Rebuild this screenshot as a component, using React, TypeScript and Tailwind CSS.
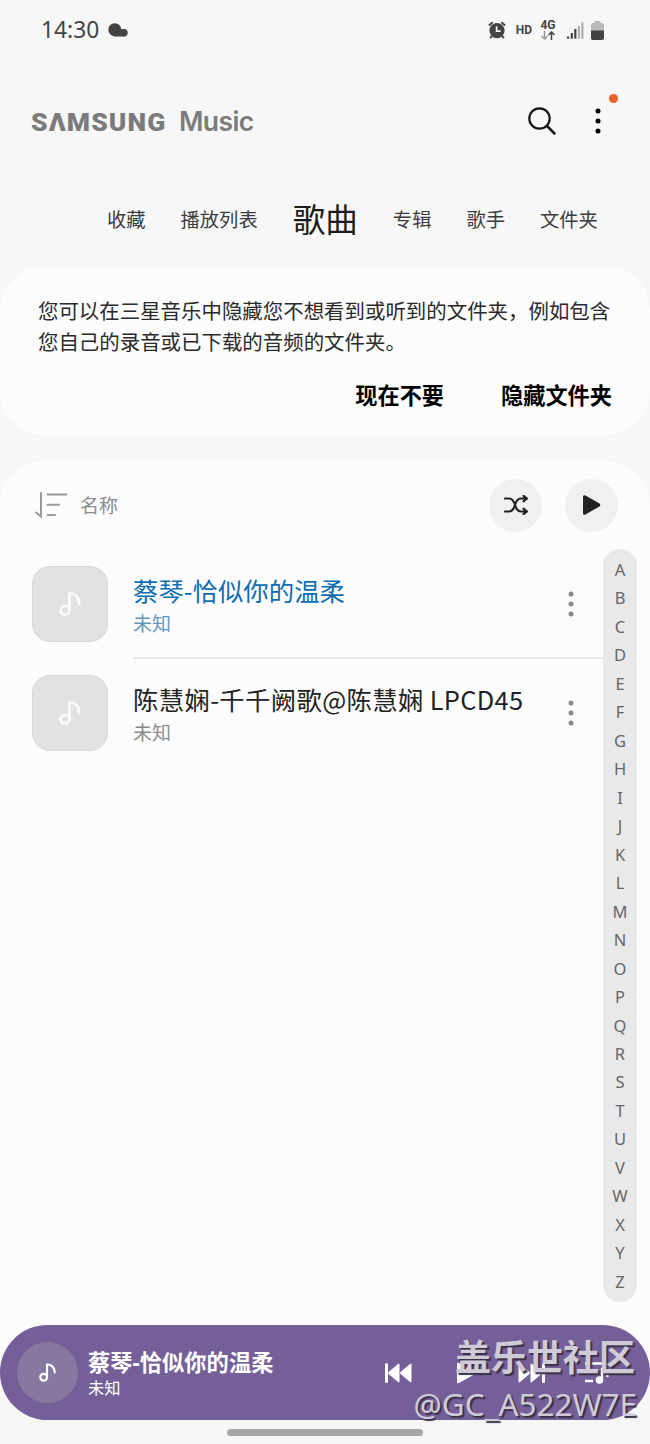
import React from "react";
import clsx from "clsx";

interface SongType {
  title: string;
  artist: string;
  playing?: boolean;
}

const tabs = ["收藏", "播放列表", "歌曲", "专辑", "歌手", "文件夹"];
const letters = "ABCDEFGHIJKLMNOPQRSTUVWXYZ".split("");
const songs: SongType[] = [
  { title: "蔡琴-恰似你的温柔", artist: "未知", playing: true },
  { title: "陈慧娴-千千阙歌@陈慧娴 LPCD45", artist: "未知" },
];

const NoteIcon = ({ className }: { className?: string }) => (
  <svg viewBox="0 0 22 24" className={className} fill="none" stroke="currentColor" strokeWidth="2.8">
    <circle cx="6" cy="18.2" r="4.4" />
    <path d="M10.4 18V1.6h1.100c5 0 8.800 4.200 8.800 10.400" strokeLinecap="round" strokeLinejoin="round" />
  </svg>
);

const DotsIcon = ({ className, r }: { className?: string; r: number }) => (
  <svg viewBox="0 0 8 28" className={className} fill="currentColor">
    <circle cx="4" cy="4" r={r} />
    <circle cx="4" cy="14" r={r} />
    <circle cx="4" cy="24" r={r} />
  </svg>
);

const SkipIcon = ({ className }: { className?: string }) => (
  <svg viewBox="0 0 27 20" className={className} fill="currentColor">
    <rect x="0" y="0" width="3" height="20" rx="1.5" />
    <path d="M14.5 1.5v17q0 1.5-1.5.5L3.6 11q-1-1 0-2L13 1q1.5-1 1.5.5zM26.5 1.5v17q0 1.5-1.5.5L15.5 11q-1-1 0-2L25 1q1.5-1 1.5.5z" />
  </svg>
);

const StatusBar = () => (
  <div className="flex h-[60px] items-center pr-[46px] pl-[41px] text-[#444]">
    <div className="pt-px text-[22.8px] leading-none">14:30</div>
    <svg viewBox="0 0 20 14" className="ml-[9px] h-[14px] w-5" fill="currentColor">
      <circle cx="6.8" cy="6.7" r="6.5" />
      <circle cx="16" cy="9.8" r="3.7" />
      <path d="M6 6h7.500l2.500.3v7.200H6z" />
    </svg>
    <div className="ml-auto flex items-center">
      <svg viewBox="0 0 18 18" className="h-[18px] w-[18px]" fill="none" stroke="currentColor">
        <circle cx="9" cy="9.6" r="7.6" fill="currentColor" stroke="none" />
        <path d="M.9 4.6 4.6 1.2M17.1 4.6l-3.7-3.4M3.9 14.8l-1.7 2.3M14.1 14.8l1.7 2.3" strokeWidth="2" />
        <path d="M8.6 5.3v4.8h4" stroke="#f7f7f7" strokeWidth="1.7" />
      </svg>
      <span className="mb-px ml-[10px] font-['Roboto'] text-[12px] leading-none font-bold">HD</span>
      <div className="ml-2 flex w-[16px] flex-col items-center">
        <span className="font-['Roboto'] text-[12px] leading-[10px] font-bold">4G</span>
        <svg viewBox="0 0 14 9" className="mt-px h-[9px] w-[14px]" fill="none" strokeWidth="1.5">
          <path d="M3.5 0v8M.5 5l3 3 3-3" stroke="#999" />
          <path d="M10.5 9V1M7.5 4l3-3 3 3" stroke="#444" />
        </svg>
      </div>
      <svg viewBox="0 0 17 17" className="ml-[11px] h-[17px] w-[17px]" fill="currentColor">
        <rect x="0" y="14.5" width="2.2" height="2.2" />
        <rect x="3.7" y="11" width="2.2" height="5.7" />
        <rect x="7.2" y="7" width="2.2" height="9.7" />
        <rect x="10.9" y="4" width="2" height="12.7" fill="#aaa" />
        <rect x="14.4" y="0.5" width="2" height="16.2" fill="#aaa" />
      </svg>
      <svg viewBox="0 0 13 19" className="ml-[7px] h-[19px] w-[13px]">
        <path d="M3.5 0h6v2H11a2 2 0 0 1 2 2v6H0V4a2 2 0 0 1 2-2h1.5z" fill="#b9b9b9" />
        <path d="M0 9.5h13V17a2 2 0 0 1-2 2H2a2 2 0 0 1-2-2z" fill="#444" />
      </svg>
    </div>
  </div>
);

const Header = () => (
  <div className="flex h-[122px] items-center pr-[48px] pl-[31px]">
    <div className="flex items-baseline pt-[2px] leading-none text-[#7b7b7b]">
      <span aria-label="SAMSUNG" className="w-[148px] font-['Roboto'] text-[26.5px] font-black tracking-[1.1px]">
        SΛMSUNG
      </span>
      <span className="font-['Inter'] text-[26.5px] font-semibold tracking-[-0.6px]">Music</span>
    </div>
    <svg viewBox="0 0 28 28" className="ml-auto h-7 w-7" fill="none" stroke="#151515">
      <circle cx="11.5" cy="11.5" r="10.2" strokeWidth="2.2" />
      <path d="m19 19 7.5 7.5" strokeWidth="2.5" strokeLinecap="round" />
    </svg>
    <div className="relative ml-[38px]">
      <DotsIcon r={2.5} className="h-7 w-2 text-black" />
      <span className="absolute -top-[13px] left-[15px] size-[9px] rounded-full bg-[#e8622a]" />
    </div>
  </div>
);

const Tabs = () => (
  <div className="flex h-[85px] items-center gap-[35px] pl-[107px] text-[19.3px] text-[#3c3c3c]">
    {tabs.map((tab) => (
      <div
        key={tab}
        className={clsx("-mt-[10px] h-[60px] leading-[60px] whitespace-nowrap", tab === "歌曲" && "text-[32.6px] text-[#1c1c1c]")}
      >
        {tab}
      </div>
    ))}
  </div>
);

const SongRow = ({ song }: { song: SongType }) => (
  <div className="flex h-[109px] pl-8">
    <div className="flex size-[76px] shrink-0 items-center justify-center rounded-[18px] border border-[#d8d8d8] bg-[#e2e2e2]">
      <NoteIcon className="h-6 w-[22px] text-[#fafafa]" />
    </div>
    <div
      className={clsx(
        "ml-[25px] flex h-[93px] flex-1 border-b-2",
        song.playing ? "border-[#e6e6e6]" : "border-transparent"
      )}
    >
      <div className="pt-[7px] whitespace-nowrap">
        <div
          className={clsx(
            "font-['Noto_Sans_CJK_SC',sans-serif] text-[25.4px] leading-[34px]",
            song.playing ? "text-[#0d6db5]" : "tracking-[0.33px] text-[#222]"
          )}
        >
          {song.title}
        </div>
        <div className={clsx("pt-[2px] text-[19px] leading-[31px]", song.playing ? "text-[#6496c0]" : "text-[#8c8c8c]")}>
          {song.artist}
        </div>
      </div>
      <DotsIcon r={2.5} className="mt-[24px] mr-[28px] ml-auto h-7 w-2 text-[#8a8a8a]" />
    </div>
  </div>
);

const MiniPlayer = () => (
  <div className="relative flex h-[95px] items-center rounded-full bg-[#755f99] pl-[17px] text-white">
    <div className="flex size-[61px] items-center justify-center rounded-full bg-[#87789f]">
      <NoteIcon className="h-[19px] w-[17px]" />
    </div>
    <div className="ml-[10px] pt-[4px]">
      <div className="text-[22.3px] leading-[26px] font-bold">蔡琴-恰似你的温柔</div>
      <div className="text-[16.3px] leading-[24px]">未知</div>
    </div>
    <div className="mr-[40px] ml-auto flex items-center">
      <SkipIcon className="h-5 w-[27px]" />
      <svg viewBox="0 0 20 22" className="ml-[45px] h-[22px] w-5" fill="currentColor">
        <path d="M0 2Q0 0 2 1l16 9q1.5 1 0 2L2 21q-2 1-2-1z" />
      </svg>
      <SkipIcon className="ml-[41px] h-5 w-[27px] -scale-x-100" />
      <svg viewBox="0 0 25 22" className="ml-[40px] h-[22px] w-[25px]" fill="none" stroke="currentColor" strokeWidth="2.6">
        <path d="M0 1.5h19M0 10h8M0 19h8" />
        <circle cx="14.5" cy="18" r="3.8" fill="currentColor" stroke="none" />
        <path d="M17 18V6c1 3 6 3 5.5 9" strokeWidth="2.2" />
      </svg>
    </div>
    <div className="absolute top-[10px] right-[13px] text-right whitespace-nowrap text-[#cfcbd6] [text-shadow:2px_2px_1px_#3a3148]">
      <div className="mr-[2px] text-[36px] leading-[46px] font-bold">盖乐世社区</div>
      <div className="text-[31.4px] leading-[46px]">@GC_A522W7E</div>
    </div>
  </div>
);

const App = () => {
  return (
    <div className="flex h-[1444px] w-[650px] flex-col overflow-hidden bg-[#f7f7f7] font-['Noto_Sans','Noto_Sans_CJK_SC',sans-serif]">
      <StatusBar />
      <Header />
      <Tabs />
      <div className="h-[168px] rounded-[44px] bg-[#fcfcfc] px-[38px] pt-[29px]">
        <p className="text-[20.46px] leading-[31px] whitespace-nowrap text-[#2a2a2a]">
          您可以在三星音乐中隐藏您不想看到或听到的文件夹，例如包含
          <br />
          您自己的录音或已下载的音频的文件夹。
        </p>
        <div className="mt-[21px] flex justify-end gap-[57px] text-[22.2px] leading-[34px] font-bold text-black">
          <button type="button">现在不要</button>
          <button type="button">隐藏文件夹</button>
        </div>
      </div>
      <div className="mt-[26px] h-[983px] shrink-0 rounded-t-[44px] bg-linear-to-b from-[#fcfcfc] from-88% to-[#f6f6f6] to-98%">
        <div className="flex h-[88px] items-center pr-8 pl-[35px]">
          <svg viewBox="0 0 33 26" className="h-[26px] w-[33px]" fill="none" stroke="#999" strokeWidth="2" strokeLinecap="round">
            <path d="M6 1v23.5L1 20.5M12.5 2.5h19M12.5 12.8h11.5M12.5 23h7.5" />
          </svg>
          <span className="mt-[2px] ml-3 text-[19px] text-[#8c8c8c]">名称</span>
          <button type="button" className="ml-auto flex size-[53px] items-center justify-center rounded-full bg-[#f0f0f0]">
            <svg
              viewBox="0 0 24 20"
              className="h-5 w-6"
              fill="none"
              stroke="#222"
              strokeWidth="2.1"
              strokeLinecap="round"
              strokeLinejoin="round"
            >
              <path d="M1 3.500h4c3.600 0 5 3 6 6.500s2.500 6.500 6 6.500h5.500M1 16.500h4c3.600 0 5-3 6-6.500s2.500-6.500 6-6.500h5.500M19.500.8l3.500 2.700-3.500 2.900M19.500 13.600l3.500 2.900-3.500 2.700" />
            </svg>
          </button>
          <button type="button" className="ml-[23px] flex size-[53px] items-center justify-center rounded-full bg-[#f0f0f0]">
            <svg viewBox="0 0 18 20" className="h-5 w-[18px]" fill="#222">
              <path d="M0 2Q0-.8 2.5.6l14 8q1.5 1.4 0 2.8l-14 8Q0 20.8 0 18z" />
            </svg>
          </button>
        </div>
        <div className="flex pr-[13px]">
          <div className="flex-1 pt-[17px]">
            {songs.map((song) => (
              <SongRow key={song.title} song={song} />
            ))}
          </div>
          <div className="flex h-[753px] w-[34px] flex-col items-center rounded-full bg-[#e9e9e9] pt-[7px] text-[16.5px] text-[#666]">
            {letters.map((letter) => (
              <span key={letter} className="h-[28.48px] leading-[28.48px]">
                {letter}
              </span>
            ))}
          </div>
        </div>
      </div>
      {/* player floats over the end of the list */}
      <div className="z-10 -mt-[119px] shrink-0">
        <MiniPlayer />
        <div className="mt-[9px] ml-[227px] h-[7px] w-[196px] rounded-full bg-[#a6a6a6]" />
      </div>
    </div>
  );
};

export default App;
